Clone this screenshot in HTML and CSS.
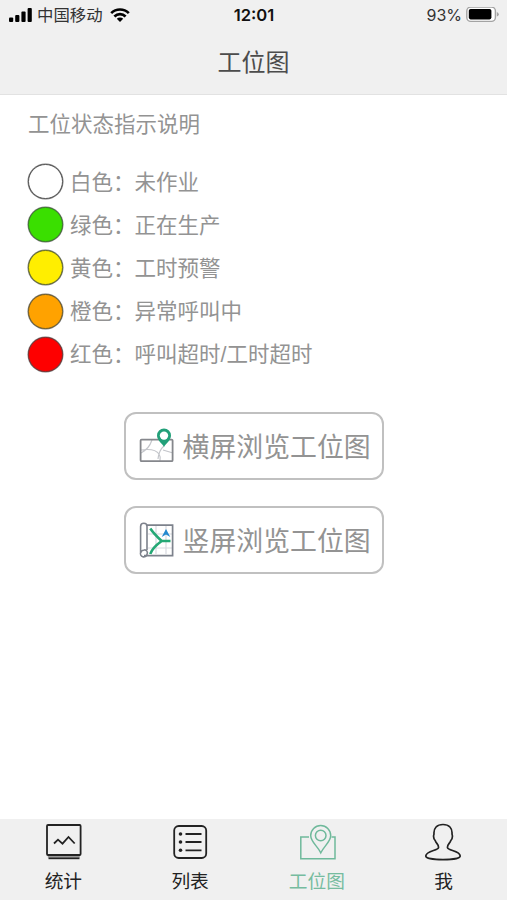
FILE: index.html
```html
<!DOCTYPE html>
<html lang="zh-CN">
<head>
    <meta charset="utf-8">
    <meta name="viewport" content="width=device-width, initial-scale=1">
    <title>工位图</title>
    <link rel="stylesheet" href="styles.css">
</head>
<body>
<div class="header">
    <div class="status">
        <div class="status-left">
            <svg class="signal" width="23" height="15" viewBox="0 0 23 15">
                <rect x="0" y="9.5" width="4.2" height="4.5" rx="1"/>
                <rect x="6.2" y="7" width="4.2" height="7" rx="1"/>
                <rect x="12.4" y="3.5" width="4.2" height="10.5" rx="1"/>
                <rect x="18.6" y="0" width="4.2" height="14" rx="1"/>
            </svg>
            <span class="carrier">中国移动</span>
            <svg class="wifi" width="20" height="15" viewBox="0 0.5 20 15">
                <path d="M1.2 5.6a12.6 12.6 0 0 1 17.6 0M4.4 9a8 8 0 0 1 11.2 0" fill="none" stroke="#000" stroke-width="2.7"/>
                <path d="M10 14.6l-3.2-3.3a4.6 4.6 0 0 1 6.4 0z"/>
            </svg>
        </div>
        <div class="clock">12:01</div>
        <div class="status-right">
            <span>93%</span>
            <svg width="33" height="16" viewBox="0 0.8 33 16">
                <rect x="0.8" y="0.8" width="28.6" height="14.4" rx="4" fill="#fff" stroke="#a3a3a3" stroke-width="1.4"/>
                <rect x="2.8" y="2.8" width="22.6" height="10.4" rx="1.8"/>
                <path d="M30.8 5.7q2 .6 2 2.3t-2 2.3z" fill="#a3a3a3"/>
            </svg>
        </div>
    </div>
    <h1>工位图</h1>
</div>

<div class="content">
    <p class="intro">工位状态指示说明</p>
    <ul class="legend">
        <li><i class="dot white"></i><span>白色：未作业</span></li>
        <li><i class="dot green"></i><span>绿色：正在生产</span></li>
        <li><i class="dot yellow"></i><span>黄色：工时预警</span></li>
        <li><i class="dot orange"></i><span>橙色：异常呼叫中</span></li>
        <li><i class="dot red"></i><span>红色：呼叫超时/工时超时</span></li>
    </ul>

    <div class="buttons">
        <a class="button">
            <svg width="36" height="36" viewBox="0 0 36 36" fill="none">
                <g stroke="#c4c6cb" stroke-width="1.2">
                    <path d="M2 25q8-4 11-13M2 22q14-2 18 4q2 3 1 7M19 31q1-9 6-13M24 22l10 3"/>
                </g>
                <rect x="1.6" y="11.6" width="32" height="21.6" rx="1" stroke="#85878c" stroke-width="1.8"/>
                <path d="M25 19c-2-4-7-6.500-7-11.500a7 7 0 0 1 14 0C32 12.500 27 15 25 19z" fill="#22a079"/>
                <circle cx="25" cy="7.6" r="4.2" fill="#fff"/>
            </svg>
            <span>横屏浏览工位图</span>
        </a>
        <a class="button">
            <svg width="36" height="36" viewBox="0 0 36 36" fill="none">
                <path d="M9 12h24M9 26h24M17 4v28M27 4v28" stroke="#d8dae0" stroke-width="1.2"/>
                <path d="M8 3.2h25.6v30.400H5" stroke="#7d828c" stroke-width="1.7"/>
                <path d="M8 28V4.500a3.200 3.200 0 0 0-6.400 0V30.500a3.200 3.200 0 0 0 6.400 2c1.200-2.500-.5-5-2.800-4.500-2 .2-3.500 1.200-3.500 3" stroke="#7d828c" stroke-width="1.6"/>
                <path d="M11.300 6.500Q15 12 22.700 19H31.500M22.700 19Q13 26 11.300 32" stroke="#25a875" stroke-width="2.6"/>
                <path d="M27 7l4.300 8-4.300-2.500-4.300 2.500z" fill="#2389cf"/>
            </svg>
            <span>竖屏浏览工位图</span>
        </a>
    </div>
</div>

<div class="tabbar">
    <a class="tab">
        <svg width="38" height="38" viewBox="-1 0 38 38" fill="none" stroke="#222" stroke-width="1.8">
            <rect x="2.8" y="31.500" width="32" height="3" fill="#999" stroke="none"/>
            <rect x="2" y="2" width="33.600" height="30" rx="1"/>
            <path d="M3.500 35.300h31"/>
            <path d="M9 20.500l4-3.800 4.500 4 6-6.700 6.200 6.500"/>
        </svg>
        <span>统计</span>
    </a>
    <a class="tab">
        <svg width="38" height="38" viewBox="0 0 38 38" fill="none" stroke="#222" stroke-width="1.8">
            <rect x="3.200" y="3" width="32" height="32" rx="4.500"/>
            <path d="M14.500 11H30.500M14.500 19H30.500M14.500 27.300H30.500"/>
            <g fill="#222" stroke="none">
                <circle cx="9.500" cy="11" r="1.800"/>
                <circle cx="9.500" cy="19" r="1.800"/>
                <circle cx="9.500" cy="27.300" r="1.800"/>
            </g>
        </svg>
        <span>列表</span>
    </a>
    <a class="tab active">
        <svg width="38" height="38" viewBox="0 -0.5 38 38" fill="none" stroke="#6fb99b" stroke-width="1.5">
            <path d="M11 13.500H2.800V35.200H37V13.500H33.500"/>
            <path d="M22.800 29.300C19.500 22.500 12.700 18.300 12.700 12a10 10 0 0 1 20 0C32.700 18.300 26 22.500 22.800 29.300z"/>
            <circle cx="22.700" cy="12" r="5.300"/>
        </svg>
        <span>工位图</span>
    </a>
    <a class="tab">
        <svg width="38" height="38" viewBox="1 0 38 38" fill="none" stroke="#222" stroke-width="1.7">
            <path d="M19 1.500c6 0 9.500 3.500 9 9.500 1 3-.2 5.500-1.300 6.700-1 3-3.700 4-3.200 7 .5 3 12.500 3 12.700 8.300 0 2.200-8 3.700-17.200 3.700S1.800 35.200 1.800 33c.2-5.300 12.200-5.300 12.700-8.300.5-3-2.200-4-3.200-7-1.100-1.200-2.300-3.700-1.300-6.700-.5-6 3-9.500 9-9.500z"/>
        </svg>
        <span>我</span>
    </a>
</div>
</body>
</html>
```

FILE: styles.css
```css
* {
    box-sizing: border-box;
}

body {
    display: flex;
    flex-direction: column;
    height: 900px;
    margin: 0;
    background-color: #fff;
    color: #939393;
    font-family: "Noto Sans CJK SC", sans-serif;
    font-weight: 400;
}

.header {
    height: 95px;
    background-color: #f0f0f0;
    border-bottom: 1px solid #e2e2e2;
}

.status {
    display: grid;
    grid-template-columns: 1fr auto 1fr;
    align-items: center;
    height: 29px;
    padding: 0 8px 0 9px;
    color: #333;
    font-family: Inter, "Noto Sans CJK SC", sans-serif;
    font-size: 16px;
    line-height: 29px;
}

.status-left,
.status-right {
    display: flex;
    align-items: center;
}

.status-right {
    justify-content: flex-end;
    gap: 4px;
}

.carrier {
    margin: 0 7px 0 5px;
    padding-top: 1px;
    font-size: 16.4px;
}

.clock {
    color: #111;
    font-size: 16.6px;
    font-weight: 600;
}

h1 {
    margin: 0;
    color: #4c4c4c;
    font-size: 24px;
    font-weight: 400;
    line-height: 63px;
    text-align: center;
}

.content {
    flex: 1;
    padding: 12px 28px 0;
    font-size: 21.5px;
}

.intro {
    margin: 0;
    line-height: 32px;
}

.legend {
    margin: 21px 0 0;
    padding: 0;
    font-family: "Liberation Sans", "Noto Sans CJK SC", sans-serif;
    list-style: none;
}

.legend li {
    display: flex;
    align-items: center;
    height: 43.2px;
}

.legend span {
    padding-bottom: 3px;
}

.dot {
    width: 35px;
    height: 35px;
    margin-right: 7px;
    border: 1px solid #555;
    border-radius: 50%;
    box-shadow: 0 0 0 0.5px #777;
}

.white {
    background-color: #fff;
}

.green {
    background-color: #3adf00;
    border-color: #3c7a2c;
}

.yellow {
    background-color: #ffee00;
    border-color: #66702a;
}

.orange {
    background-color: #ffa200;
    border-color: #73602a;
}

.red {
    background-color: #fe0000;
    border-color: #7c3030;
}

.buttons {
    display: flex;
    flex-direction: column;
    align-items: center;
    gap: 26px;
    margin-top: 36px;
}

.button {
    display: flex;
    align-items: center;
    gap: 8px;
    width: 260px;
    height: 68px;
    padding-left: 13px;
    border: 2px solid #c0c0c0;
    border-radius: 12px;
    font-size: 26.9px;
    white-space: nowrap;
}

.tabbar {
    display: flex;
    height: 81px;
    background-color: #f0f0f0;
}

.tab {
    display: flex;
    flex: 1;
    flex-direction: column;
    align-items: center;
    padding-top: 4px;
    color: #222;
    font-size: 18.7px;
    line-height: 28px;
}

.tab span {
    margin-top: 5px;
}

.active {
    color: #76bc9f;
}
```
